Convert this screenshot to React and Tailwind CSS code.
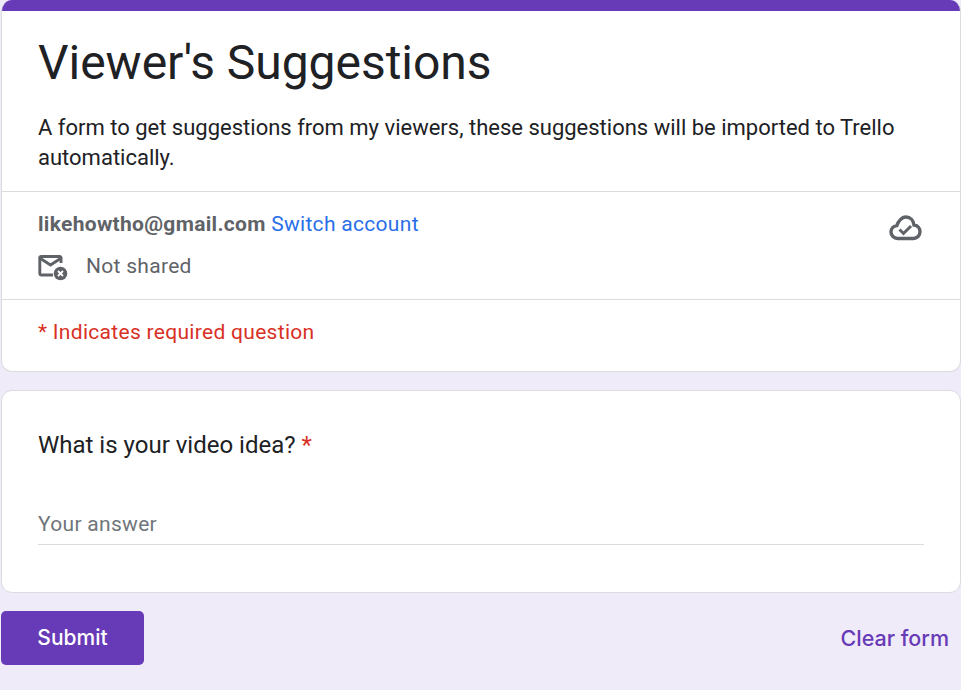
export default function App() {
  return (
    <div className="h-[690px] w-[961px] overflow-hidden bg-[#f0ebf8] pl-px font-['Roboto',sans-serif]">
      <div className="w-[960px] overflow-hidden rounded-[11px] border border-t-0 border-[#dadce0] bg-white">
        <div className="-ml-px -mr-px h-[11px] bg-[#673ab7]" />
        <div className="h-[180px] px-[36px] pt-[26px]">
          <h1 className="text-[48px] leading-[52px] tracking-[-0.03px] text-[#202124]">Viewer's Suggestions</h1>
          <p className="mt-[24px] text-[22px] leading-[30px] text-[#202124]">
            A form to get suggestions from my viewers, these suggestions will be imported to Trello automatically.
          </p>
        </div>
        <div className="flex h-[109px] justify-between border-y border-[#dadce0] pl-[36px] pr-[37px]">
          <div>
            <div className="mt-[18px] text-[21px] leading-[28px] tracking-[0.3px]">
              <span className="font-bold text-[#5f6368]">likehowtho@gmail.com</span>{" "}
              <span className="text-[#2a6fe8]">Switch account</span>
            </div>
            <div className="mt-[13px] flex items-center">
              <svg width="30" height="30" viewBox="0 0 30 30" className="shrink-0" fill="none">
                <path d="M23 12V7.500A1.500 1.500 0 0 0 21.500 5.500h-18A1.500 1.500 0 0 0 1.800 7.500v15A1.500 1.500 0 0 0 3.500 24H15" stroke="#5f6368" strokeWidth="2.900" />
                <path d="M2.500 7.500l10 6.500 10-6.500" stroke="#5f6368" strokeWidth="2.800" />
                <circle cx="22.500" cy="22.500" r="6.800" fill="#5f6368" />
                <path d="M20 20l5 5M25 20l-5 5" stroke="#fff" strokeWidth="1.800" />
              </svg>
              <span className="ml-[18px] text-[21px] leading-[28px] tracking-[0.3px] text-[#5f6368]">Not shared</span>
            </div>
          </div>
          <svg width="34" height="28" viewBox="0 0 34 28" fill="none" stroke="#5f6368" className="mt-[22px]">
            <path d="M8.500 24.500C5 24.500 2 21.500 2 18c0-3.300 2.500-6 5.800-6.400C9 8 12.500 3 17 3c4.500 0 7.500 3.500 8 8 3.500.3 6 3 6 6.800 0 3.700-3 6.700-6.500 6.700z" strokeWidth="3.400" />
            <path d="M10.500 15.500l4 4L22 12" strokeWidth="3" />
          </svg>
        </div>
        <div className="h-[71px] pl-[36px] pt-[18px] text-[21px] leading-[28px] tracking-[0.3px] text-[#d93025]">* Indicates required question</div>
      </div>
      <div className="mt-[18px] h-[203px] w-[959.500px] rounded-[11px] border border-[#dadce0] bg-white pl-[36px] pr-[36px] pt-[39px]">
        <div className="text-[24px] leading-[30px] text-[#202124]">
          What is your video idea? <span className="text-[#d93025]">*</span>
        </div>
        <div className="mt-[35px] h-[50px] border-b border-[#dadce0] pt-[15px] text-[21px] leading-[28px] tracking-[0.3px] text-[#70757a]">Your answer</div>
      </div>
      <div className="mt-[18px] flex items-center justify-between pr-[12px]">
        <button className="h-[54px] w-[143px] rounded-[5px] bg-[#673ab7] font-['Inter',sans-serif] text-[21px] font-medium text-white">Submit</button>
        <span className="font-['Inter',sans-serif] text-[21.500px] font-medium text-[#673ab7]">Clear form</span>
      </div>
    </div>
  );
}
